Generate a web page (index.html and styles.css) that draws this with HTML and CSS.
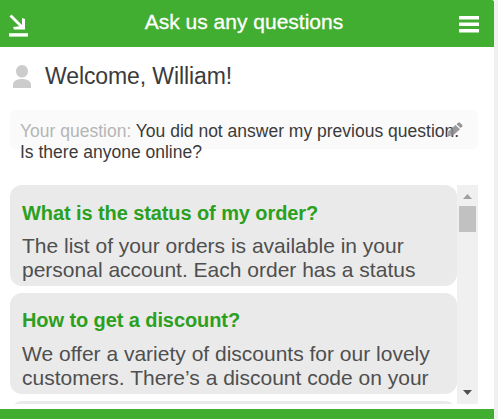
FILE: index.html
```html
<!DOCTYPE html>
<html lang="en">
<head>
    <meta charset="UTF-8">
    <meta name="viewport" content="width=device-width, initial-scale=1.0">
    <title>Ask us any questions</title>
    <link rel="stylesheet" href="styles.css">
</head>
<body>
    <div class="chat">
        <header class="header">
            <svg class="minimize" width="20" height="23" viewBox="0 0 20 23">
                <path d="M1.5 1.5L13 13" fill="none" stroke="#fff" stroke-width="2.8"/>
                <path d="M13 4L16 5V15.5H5L4 13L13 12Z" fill="#fff"/>
                <rect x="0" y="19.2" width="19" height="3.4" fill="#fff"/>
            </svg>
            <h1 class="title">Ask us any questions</h1>
            <svg class="menu" width="20" height="17" viewBox="0 0 20 17">
                <path d="M0 1.8H20M0 8.2H20M0 14.7H20" stroke="#fff" stroke-width="3.4"/>
            </svg>
        </header>

        <main class="content">
            <div class="welcome">
                <svg width="18" height="23" viewBox="0 0 18 23">
                    <ellipse cx="9" cy="6.3" rx="6" ry="6.3" fill="#ccc"/>
                    <path d="M0 23V20C0 16 4 14 9 14S18 16 18 20V23Z" fill="#ccc"/>
                </svg>
                <h2>Welcome, William!</h2>
            </div>

            <div class="question">
                <p><span class="label">Your question:</span> You did not answer my previous question. Is there anyone online?</p>
                <svg class="edit" width="16" height="15" viewBox="0 0 16 15">
                    <path d="M0.5 14.5L1.5 9.3L8.5 3L13 7.2L6 13.5Z" fill="#888" fill-opacity="0.85"/>
                    <path d="M9.6 2.2L11.2 0.8Q12 0 12.8 0.7L15.3 3Q16 3.8 15.2 4.6L13.8 6Z" fill="#888" fill-opacity="0.9"/>
                    <path d="M1.6 11.2L4.2 13.6" stroke="#ccc" stroke-width="1"/>
                </svg>
            </div>

            <div class="faq">
                <div class="faq-list">
                    <div class="card">
                        <h3>What is the status of my order?</h3>
                        <p>The list of your orders is available in your personal account. Each order has a status</p>
                    </div>
                    <div class="card">
                        <h3>How to get a discount?</h3>
                        <p>We offer a variety of discounts for our lovely customers. There’s a discount code on your</p>
                    </div>
                    <div class="card"></div>
                </div>
                <div class="scrollbar">
                    <svg width="9" height="5" viewBox="0 0 9 5"><path d="M0 5L4.5 0L9 5Z" fill="#a0a0a0"/></svg>
                    <div class="thumb"></div>
                    <svg class="down" width="9" height="5" viewBox="0 0 9 5"><path d="M0 0H9L4.5 5Z" fill="#505050"/></svg>
                </div>
            </div>
        </main>

        <footer class="footer"></footer>
    </div>
</body>
</html>
```

FILE: styles.css
```css
* {
    box-sizing: border-box;
}

body {
    margin: 0;
    background-color: #f0f0f0;
    font-family: "Liberation Sans", Arial, sans-serif;
    color: #3b3b3b;
}

h1, h2, h3, p {
    margin: 0;
    font-weight: normal;
}

svg {
    display: block;
}

.chat {
    display: flex;
    flex-direction: column;
    width: 494px;
    height: 419px;
    background-color: #fff;
    overflow: hidden;
}

/* Header */
.header {
    display: flex;
    justify-content: space-between;
    height: 47px;
    padding: 0 15px 0 9px;
    background-color: #41ad31;
    border-top-right-radius: 2px;
    color: #fff;
}

.minimize {
    margin-top: 14px;
}

.title {
    font-size: 21px;
    line-height: 44px;
    -webkit-text-stroke: 0.3px #fff;
}

.menu {
    margin-top: 16px;
}

/* Content */
.content {
    height: 362px;
    padding: 0 16px 0 10px;
}

.welcome {
    display: flex;
    align-items: center;
    gap: 14px;
    height: 63px;
    padding: 0 0 5px 3px;
}

.welcome h2 {
    font-size: 23px;
    line-height: 28px;
    letter-spacing: -0.1px;
}

.question {
    position: relative;
    height: 39px;
    padding: 11px 10px 0;
    background-color: #fafafa;
    border-radius: 6px;
    font-size: 17.5px;
    line-height: 21px;
}

.label {
    color: #b5b5b5;
}

.edit {
    position: absolute;
    top: 12px;
    right: 15px;
}

.faq {
    display: flex;
    height: 219px;
    margin-top: 36px;
}

.faq-list {
    flex: 1;
    overflow: hidden;
}

.card {
    height: 101px;
    margin-bottom: 7px;
    padding: 16px 10px 0 12px;
    background-color: #eaeaea;
    border-radius: 12px;
    overflow: hidden;
}

.card h3 {
    font-size: 20px;
    font-weight: bold;
    line-height: 24px;
    letter-spacing: -0.09px;
    color: #2ba01f;
}

.card p {
    margin-top: 9px;
    font-size: 21px;
    line-height: 24px;
    color: #4f4f4f;
}

.card + .card {
    padding-top: 15px;
}

.card + .card p {
    margin-top: 10px;
}

.scrollbar {
    display: flex;
    flex-direction: column;
    align-items: center;
    width: 21px;
    padding: 9px 0;
    background-color: #f0f0f0;
}

.thumb {
    width: 17px;
    height: 26px;
    margin-top: 7px;
    background-color: #c1c1c1;
}

.down {
    margin-top: auto;
}

.footer {
    height: 10px;
    background-color: #41ad31;
}
```
